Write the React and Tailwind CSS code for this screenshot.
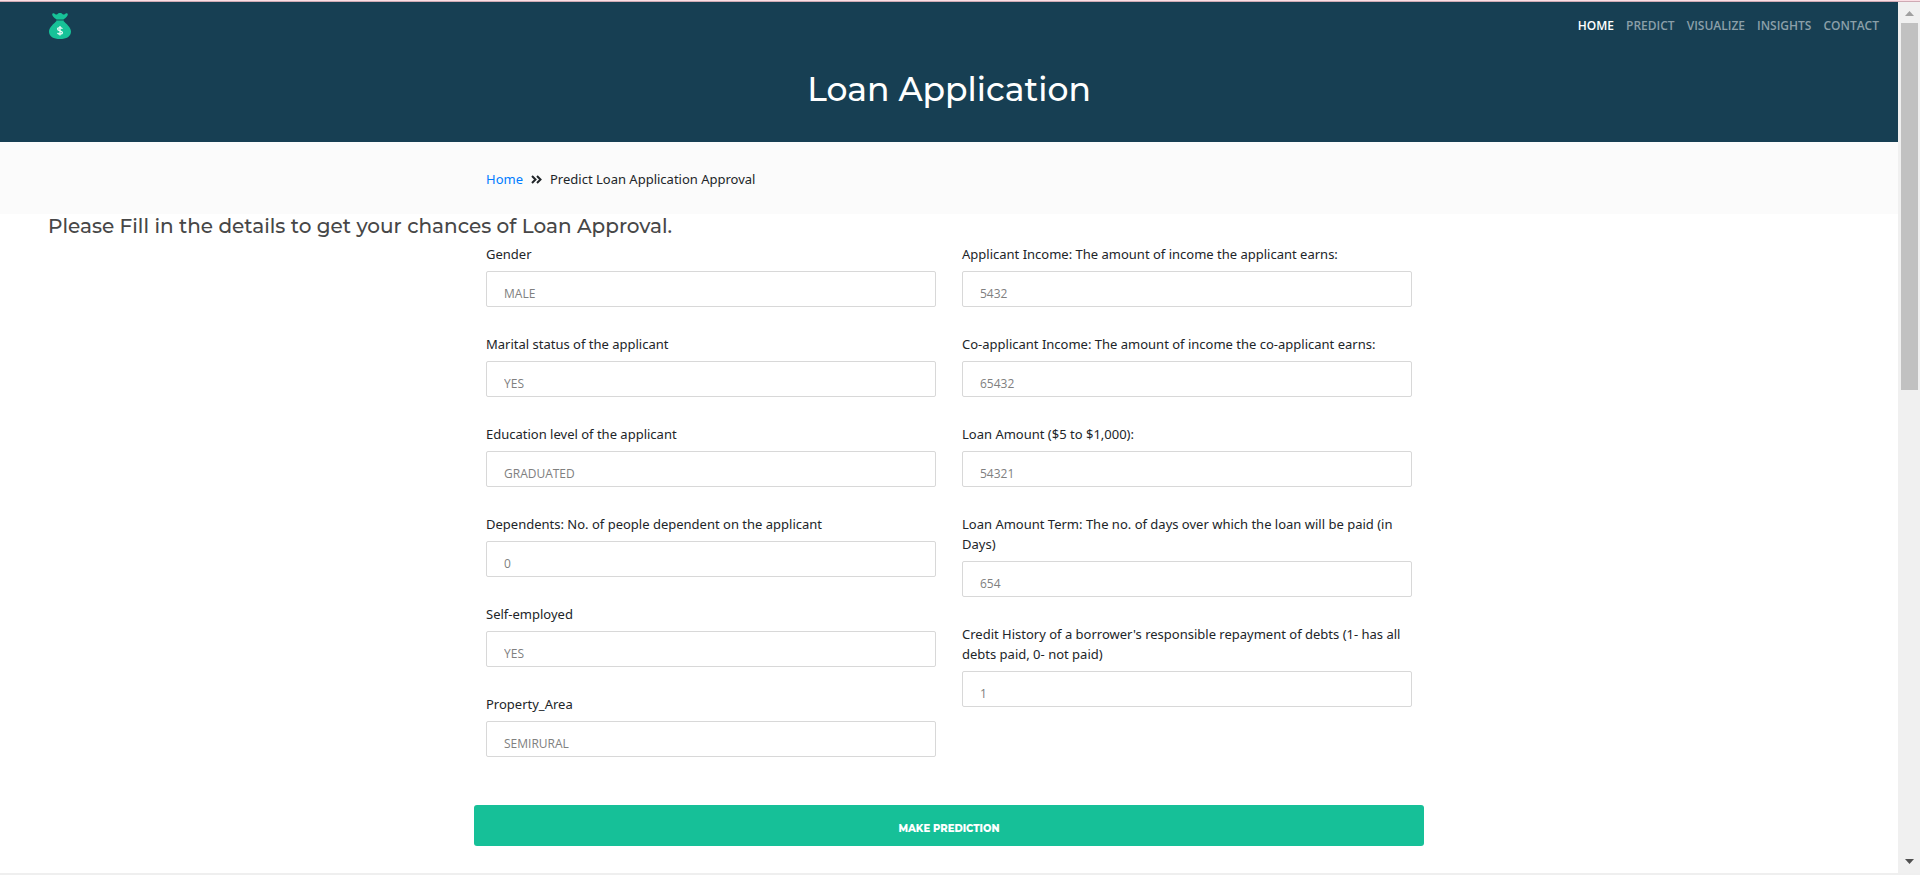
import React from "react";

const NAV = ["Home", "Predict", "Visualize", "Insights", "Contact"];

const LEFT_FIELDS = [
  { id: "gender", label: "Gender", hint: "MALE" },
  { id: "married", label: "Marital status of the applicant", hint: "YES" },
  { id: "education", label: "Education level of the applicant", hint: "GRADUATED" },
  { id: "dependents", label: "Dependents: No. of people dependent on the applicant", hint: "0" },
  { id: "self-employed", label: "Self-employed", hint: "YES" },
  { id: "property-area", label: "Property_Area", hint: "SEMIRURAL" },
];

const RIGHT_FIELDS = [
  { id: "income", label: "Applicant Income: The amount of income the applicant earns:", hint: "5432" },
  { id: "co-income", label: "Co-applicant Income: The amount of income the co-applicant earns:", hint: "65432" },
  { id: "amount", label: "Loan Amount ($5 to $1,000):", hint: "54321" },
  { id: "term", label: "Loan Amount Term: The no. of days over which the loan will be paid (in Days)", hint: "654" },
  { id: "credit", label: "Credit History of a borrower's responsible repayment of debts (1- has all debts paid, 0- not paid)", hint: "1" },
];

function MoneyBag() {
  return (
    <svg viewBox="0 0 22 26" className="h-[26px] w-[22px]" aria-hidden="true">
      <path
        d="M3.200 1.400C3.200.3 4.900-.1 6 .9c.8.7 1.500 1 2.300.3C9 .5 9.800 0 11 0s2 .5 2.700 1.200c.8.7 1.500.4 2.300-.3 1.100-1 2.800-.6 2.800.5C18.800 3 16.500 5 15 6H7C5.500 5 3.200 3 3.200 1.400Z"
        fill="#17c298"
      />
      <rect x="7" y="6" width="8" height="2" rx="1" fill="#128a76" />
      <path d="M7.500 8h7C17 10.500 22 14.500 22 18.500 22 23.500 17.500 26 11 26S0 23.500 0 18.500C0 14.500 5 10.500 7.500 8Z" fill="#17c298" />
      <path
        d="M13.400 15.800c-.4-.8-1.300-1.200-2.400-1.200-1.400 0-2.400.6-2.400 1.500 0 2.300 4.800 1.200 4.800 3.400 0 1-1 1.600-2.400 1.600-1.200 0-2.100-.5-2.500-1.200M11 13v9.600"
        fill="none"
        stroke="#e8fbf6"
        strokeWidth="1.3"
      />
    </svg>
  );
}

function Field({ id, label, hint }) {
  return (
    <div className="mb-[27px]">
      <label htmlFor={id} className="mb-[7px] block text-[13px] leading-[20px] text-[#212529]">
        {label}
      </label>
      <input
        id={id}
        type="text"
        placeholder={hint}
        className="block h-[36px] w-full rounded-xs border border-[#d8d8d8] bg-white px-[17px] pt-[9px] font-['Open_Sans',sans-serif] text-[12px] text-[#808080] placeholder:text-[#808080] placeholder:opacity-100"
      />
    </div>
  );
}

function Scrollbar() {
  return (
    <div className="flex w-[22px] shrink-0 flex-col items-center justify-between bg-[#f0f0f0]" aria-hidden="true">
      <div className="flex w-full flex-col items-center">
        <svg viewBox="0 0 9 5" className="mt-[9px] mb-[7px] h-[5px] w-[9px]">
          <path d="M0 5 4.500 0 9 5Z" fill="#a0a0a0" />
        </svg>
        <div className="h-[367px] w-[17px] bg-[#c1c1c1]" />
      </div>
      <svg viewBox="0 0 9 5" className="mb-[9px] h-[5px] w-[9px]">
        <path d="M0 0h9L4.500 5Z" fill="#505050" />
      </svg>
    </div>
  );
}

export default function App() {
  return (
    <div className="flex min-h-screen flex-col border-b-2 border-[#efefef] bg-white font-['Noto_Sans',sans-serif] text-[#212529]">
      <div className="h-[2px] border-b border-[#cfaab4] bg-[#fbdfe5]" />
      <div className="flex grow">
        <div className="min-w-0 grow">
          <header className="h-[140px] bg-[#173f53]">
            <nav className="flex h-[48px] items-center justify-between pr-[19px] pl-[49px]">
              <a href="#home" aria-label="Loan home">
                <MoneyBag />
              </a>
              <ul className="flex gap-[12px] font-['Open_Sans',sans-serif] text-[12px] font-semibold uppercase">
                {NAV.map((item, i) => (
                  <li key={item}>
                    <a href={"#" + item.toLowerCase()} className={i === 0 ? "text-white" : "text-[#8b9fa9]"}>
                      {item}
                    </a>
                  </li>
                ))}
              </ul>
            </nav>
            <h1 className="pt-[17px] text-center font-['Montserrat',sans-serif] text-[33px] leading-[44px] font-medium text-white">
              Loan Application
            </h1>
          </header>

          <div className="bg-[#fbfbfb]">
            <div className="mx-auto flex h-[72px] max-w-[950px] items-center gap-[8px] px-[12px] pt-[3px] text-[13px]">
              <a href="#home" className="text-[#007bff]">
                Home
              </a>
              <svg viewBox="0 0 11 9" className="h-[9px] w-[11px]" aria-hidden="true">
                <path d="m1 1 3.500 3.500L1 8M6 1l3.500 3.500L6 8" fill="none" stroke="#212529" strokeWidth="2" />
              </svg>
              <span>Predict Loan Application Approval</span>
            </div>
          </div>

          <main>
            <h2 className="px-[48px] font-['Montserrat',sans-serif] text-[20px] leading-[24px] font-medium text-[#474747]">
              Please Fill in the details to get your chances of Loan Approval.
            </h2>
            <form className="mx-auto max-w-[950px] pt-[6px]">
              <div className="grid grid-cols-2 gap-[26px] px-[12px]">
                <div>
                  {LEFT_FIELDS.map((f) => (
                    <Field key={f.id} {...f} />
                  ))}
                </div>
                <div>
                  {RIGHT_FIELDS.map((f) => (
                    <Field key={f.id} {...f} />
                  ))}
                </div>
              </div>
              <button
                type="button"
                className="mt-[21px] h-[41px] w-full rounded-[3px] bg-[#16c098] pt-[6px] font-['Montserrat',sans-serif] text-[10px] font-extrabold text-white uppercase"
              >
                Make Prediction
              </button>
            </form>
          </main>
        </div>
        <Scrollbar />
      </div>
    </div>
  );
}
